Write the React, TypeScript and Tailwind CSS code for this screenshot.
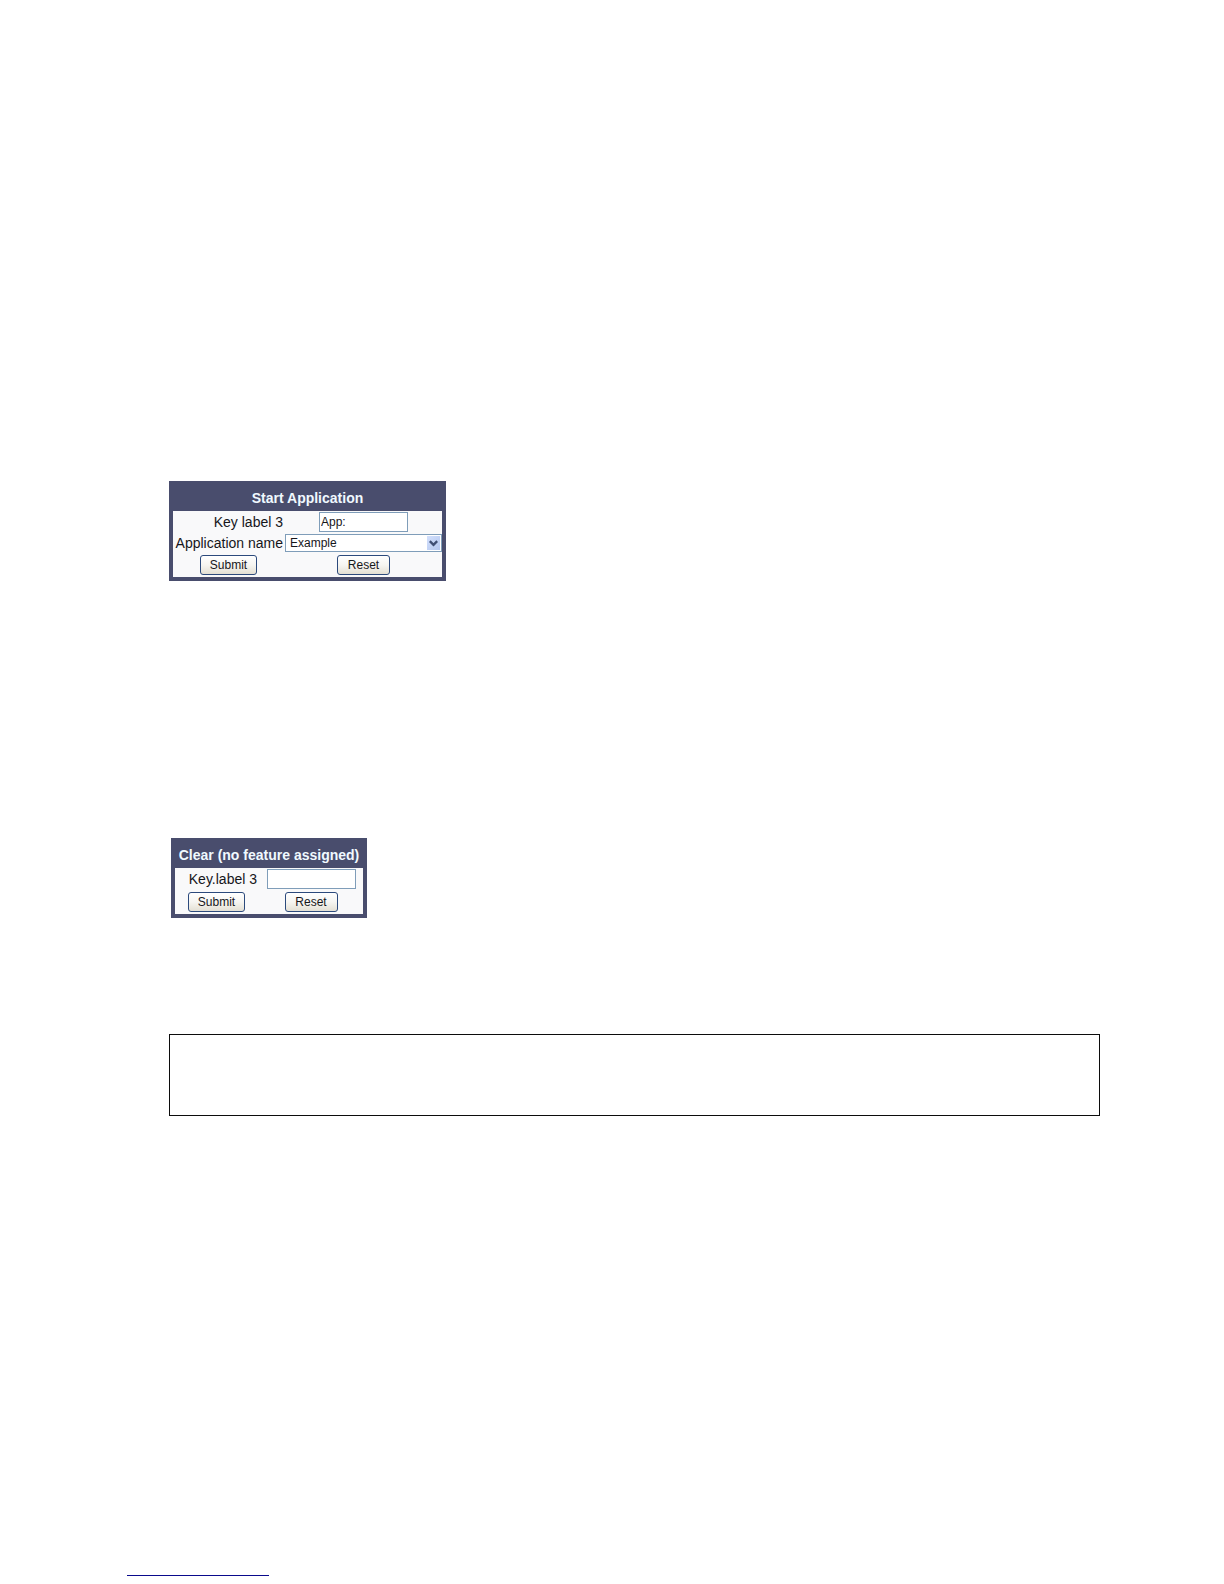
import type { ReactNode } from "react"

interface PanelProps {
  title: string
  className: string
  columns: string
  children: ReactNode
}

function Panel({ title, className, columns, children }: PanelProps) {
  return (
    <form onSubmit={(e) => e.preventDefault()} className={`border-4 border-[#494d6d] bg-[#494d6d] ${className}`}>
      <h2 className="h-[26px] text-center text-sm leading-[26px] font-bold whitespace-nowrap text-[#f0f9ff]">{title}</h2>
      <div className={`grid items-center gap-x-px bg-[#f9f9fa] ${columns}`}>{children}</div>
    </form>
  )
}

function KeyLabelRow({ id, label, value }: { id: string; label: string; value: string }) {
  return (
    <>
      <label htmlFor={id} className="pr-px text-right text-sm leading-[22px] whitespace-nowrap">
        {label}
      </label>
      <div className="flex h-[22px] items-center justify-center">
        <input
          id={id}
          type="text"
          defaultValue={value}
          className="h-5 w-[89px] border border-[#7f9db9] bg-white px-px text-xs outline-none"
        />
      </div>
    </>
  )
}

const buttonClass =
  "h-5 rounded-[3px] border border-[#2c4a7c] bg-linear-to-b from-white via-[#f6f5f1] to-[#e4e0d4] text-center text-xs leading-4"

function ButtonRow() {
  return (
    <>
      <div className="flex h-6 items-center justify-center">
        <button type="submit" className={`w-[57px] ${buttonClass}`}>
          Submit
        </button>
      </div>
      <div className="flex h-6 items-center justify-center">
        <button type="reset" className={`w-[53px] ${buttonClass}`}>
          Reset
        </button>
      </div>
    </>
  )
}

export default function App() {
  return (
    <div className="min-h-screen bg-white pt-[481px] font-['Liberation_Sans',Arial,sans-serif] text-[#16161a]">
      <main className="mr-[124px] ml-[169px]">
        <Panel title="Start Application" className="w-[277px]" columns="grid-cols-[111px_1fr]">
          <KeyLabelRow id="start-key-label" label="Key label 3" value="App:" />
          <label htmlFor="application-name" className="pr-px text-right text-sm leading-5 whitespace-nowrap">
            Application name
          </label>
          <div className="relative flex h-5 items-center">
            <select
              id="application-name"
              className="h-[18px] w-full appearance-none border border-[#7f9db9] bg-white px-1 text-xs leading-4 outline-none"
            >
              <option>Example</option>
            </select>
            <span className="pointer-events-none absolute top-[3px] right-[2px] flex h-3.5 w-[13px] items-center justify-center bg-linear-to-br from-[#d3e0fc] to-[#b4c7ef]">
              <svg width="9" height="7" viewBox="0 0 9 7" fill="none" stroke="#3f4f74" strokeWidth="2.4">
                <path d="M.8 1.2 4.5 4.9 8.2 1.2" />
              </svg>
            </span>
          </div>
          <ButtonRow />
        </Panel>

        <Panel title="Clear (no feature assigned)" className="mt-[257px] ml-[2px] w-[196px]" columns="grid-cols-[83px_1fr]">
          <KeyLabelRow id="clear-key-label" label="Key.label 3" value="" />
          <ButtonRow />
        </Panel>

        <section className="mt-[116px] h-[82px] border border-[#0c0c0c]" />
      </main>

      <footer className="mt-[452px] ml-[127px]">
        <a href="#" className="block h-2 w-[142px] border-b border-[#0a0a8c]" />
      </footer>
    </div>
  )
}
